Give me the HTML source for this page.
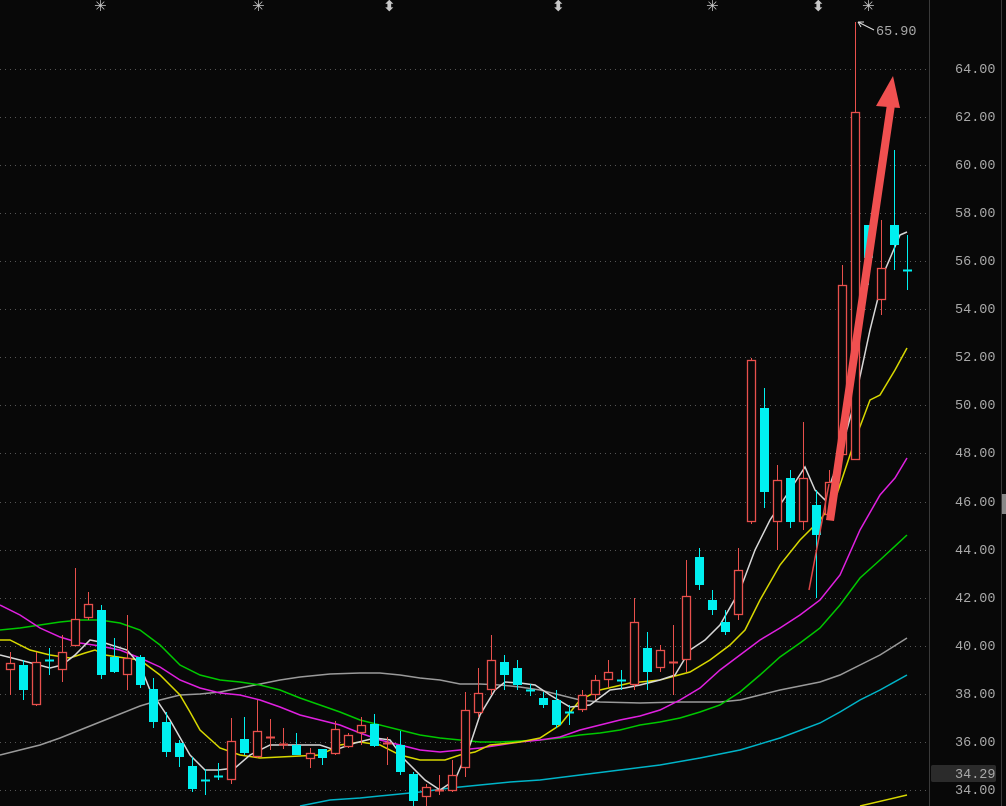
<!DOCTYPE html>
<html><head><meta charset="utf-8"><style>
html,body{margin:0;padding:0;background:#080808;width:1006px;height:806px;overflow:hidden}
svg{display:block}
text{font-family:"Liberation Mono","DejaVu Sans Mono",monospace;font-size:13.5px;fill:#a8a8a8}
.ic{font-family:"DejaVu Sans",sans-serif;font-size:15px;fill:#c8c8c8;font-weight:bold}
</style></head><body>
<svg id="s" width="1006" height="806" viewBox="0 0 1006 806" xmlns="http://www.w3.org/2000/svg">
<rect width="1006" height="806" fill="#080808"/>
<g id="grid" stroke="#555" stroke-width="1" stroke-dasharray="1,4"></g>
<line x1="929.5" y1="0" x2="929.5" y2="806" stroke="#3a3a3a"/>
<line x1="1001.5" y1="0" x2="1001.5" y2="806" stroke="#3a3a3a"/>
<g id="ma" fill="none" stroke-width="1.5"></g>
<g id="cd"></g>
<g id="labels">
<text x="955" y="73">64.00</text>
<text x="955" y="121">62.00</text>
<text x="955" y="169">60.00</text>
<text x="955" y="217">58.00</text>
<text x="955" y="265">56.00</text>
<text x="955" y="313">54.00</text>
<text x="955" y="361">52.00</text>
<text x="955" y="409">50.00</text>
<text x="955" y="457">48.00</text>
<text x="955" y="506">46.00</text>
<text x="955" y="554">44.00</text>
<text x="955" y="602">42.00</text>
<text x="955" y="650">40.00</text>
<text x="955" y="698">38.00</text>
<text x="955" y="746">36.00</text>
<text x="955" y="794">34.00</text>
</g>
<rect x="931" y="765" width="65" height="17" rx="2" fill="#2b2b2b"/>
<text x="955" y="778" fill="#d0d0d0">34.29</text>
<text x="876" y="35" fill="#e0e0e0">65.90</text>
<path d="M858 22 L874 30" stroke="#ddd" stroke-width="1"/>
<path d="M858 22 l6 0 M858 22 l3 5" stroke="#ddd" stroke-width="1"/>
<text class="ic" x="94" y="11">✳</text>
<text class="ic" x="252" y="11">✳</text>
<text class="ic" x="706" y="11">✳</text>
<text class="ic" x="862" y="11">✳</text>
<text class="ic" x="383" y="11">⬍</text>
<text class="ic" x="552" y="11">⬍</text>
<text class="ic" x="812" y="11">⬍</text>
<path d="M809 590 L829 484" stroke="#e04848" stroke-width="1.5"/>
<polygon points="826,520 887,104 895,105 834,521" fill="#f05050"/>
<polygon points="876,106 893,76 900,108" fill="#f05050"/>
<rect x="1002" y="494" width="4" height="20" fill="#888"/>
</svg>
<script>
var NS="http://www.w3.org/2000/svg";
function el(p,t,a){var e=document.createElementNS(NS,t);for(var k in a)e.setAttribute(k,a[k]);document.getElementById(p).appendChild(e);}
[69,117,165,213,261,309,357,405,453,502,550,598,646,694,742,790].forEach(function(y){el('grid','line',{x1:0,y1:y+.5,x2:928,y2:y+.5});});
var mas=[
['#9a9a9a',[[0,755],[20,750],[40,745],[60,738],[80,730],[100,722],[120,714],[140,706],[160,700],[180,695],[200,694],[220,692],[240,688],[260,684],[280,680],[300,677],[330,674],[360,673],[380,673],[400,675],[420,678],[440,680],[460,684],[480,684],[500,685],[520,687],[540,690],[560,695],[580,700],[600,702],[640,703],[680,702],[720,702],[740,700],[760,695],[780,690],[800,686],[820,682],[840,675],[860,665],[880,655],[907,638]]],
['#00b4c8',[[300,806],[330,800],[360,798],[390,795],[420,792],[450,788],[480,785],[510,782],[540,780],[580,775],[620,770],[660,765],[700,758],[740,750],[780,738],[820,723],[840,712],[860,700],[880,690],[907,675]]],
['#00c800',[[0,630],[20,628],[40,625],[60,622],[80,620],[100,620],[120,623],[140,630],[160,645],[180,665],[200,675],[220,680],[240,682],[260,685],[280,690],[300,698],[320,705],[340,712],[360,720],[380,725],[400,730],[420,735],[440,738],[460,740],[480,742],[500,742],[520,741],[540,740],[560,738],[580,735],[600,733],[620,730],[640,725],[660,722],[680,718],[700,712],[720,705],[740,692],[760,675],[780,657],[800,643],[820,628],[840,605],[860,578],[880,560],[907,535]]],
['#e020e0',[[0,605],[20,615],[40,628],[60,637],[80,643],[100,646],[120,650],[140,658],[160,667],[180,680],[200,688],[220,693],[240,695],[260,700],[280,707],[300,715],[320,720],[340,725],[360,733],[380,740],[400,745],[420,750],[440,752],[460,750],[480,748],[500,745],[520,742],[540,740],[560,737],[580,730],[600,725],[620,720],[640,716],[660,710],[680,700],[700,688],[720,670],[740,655],[760,640],[780,628],[800,615],[820,600],[840,575],[860,530],[880,495],[895,478],[907,458]]],
['#d8d800',[[0,640],[10,640],[30,650],[50,655],[70,658],[85,653],[95,650],[105,655],[125,658],[140,660],[160,675],[180,695],[190,712],[200,730],[220,748],[240,755],[260,758],[280,757],[300,756],[320,755],[340,745],[360,742],[380,745],[400,755],[420,760],[445,760],[460,755],[475,752],[490,745],[520,742],[540,738],[560,725],[580,700],[600,690],[630,683],[660,680],[690,672],[710,660],[730,645],[745,630],[760,600],[780,565],[800,540],[820,520],[835,500],[845,470],[855,440],[870,400],[880,395],[895,370],[907,348]]],
['#d8d8d8',[[0,655],[20,660],[50,668],[62,665],[75,655],[90,640],[105,643],[127,650],[140,665],[150,690],[170,720],[190,755],[205,770],[218,770],[235,768],[250,755],[270,745],[300,745],[320,745],[335,750],[355,743],[375,738],[390,740],[405,760],[425,780],[440,790],[455,780],[470,745],[480,715],[495,690],[505,682],[520,683],[535,685],[550,695],[570,707],[590,705],[610,690],[625,688],[640,685],[660,680],[675,675],[690,650],[705,640],[720,625],[740,590],[755,550],[770,520],[790,490],[805,467],[815,490],[825,500],[840,455],[855,400],[870,330],[885,270],[900,235],[907,232]]],
['#d8d800',[[860,806],[907,795]]]
];
mas.forEach(function(m){el('ma','polyline',{points:m[1].map(function(p){return p.join(',')}).join(' '),stroke:m[0]});});
var C=[
[10,'r',663,670,652,695],[23,'c',665,690,660,700],[36,'r',662,705,652,706],[49,'c',660,660,648,675],[62,'r',652,670,635,682],
[75,'r',619,646,568,646],[88,'r',604,618,592,620],[101,'c',610,675,605,679],[114,'c',657,672,638,673],[127,'r',658,675,615,690],
[140,'c',657,685,655,688],[153,'c',689,722,678,728],[166,'c',722,752,712,757],[179,'c',743,757,740,767],[192,'c',766,789,757,792],
[205,'c',780,780,769,795],[218,'c',776,776,763,780],[231,'r',741,780,718,784],[244,'c',739,753,717,755],[257,'r',731,757,700,758],
[270,'r',737,737,719,750],[283,'r',744,744,728,749],[296,'c',745,755,733,755],[310,'r',753,759,748,768],[322,'c',749,758,749,765],
[335,'r',729,754,721,755],[348,'r',735,747,733,748],[361,'r',725,733,717,745],[374,'c',724,746,714,747],[387,'r',743,743,737,765],
[400,'c',745,772,731,775],[413,'c',774,801,772,806],[426,'r',787,797,784,806],[439,'r',790,790,775,795],[452,'r',775,791,760,792],
[465,'r',710,768,692,777],[478,'r',693,713,668,717],[491,'r',660,690,635,695],[504,'c',662,675,655,690],[517,'c',668,685,660,690],
[530,'c',690,690,684,696],[543,'c',698,705,692,708],[556,'c',700,725,690,728],[569,'c',712,712,705,725],[582,'r',695,710,690,712],
[595,'r',680,695,675,700],[608,'r',672,680,660,688],[621,'c',680,680,670,690],[634,'r',622,685,598,690],[647,'c',648,672,632,690],
[660,'r',650,668,645,672],[673,'r',662,662,625,695],[686,'r',596,660,560,672],[699,'c',557,585,548,590],[712,'c',600,610,590,615],
[725,'c',622,632,610,635],[738,'r',570,615,548,620],[751,'r',360,522,358,524],[764,'c',408,492,388,508],[777,'r',480,522,465,550],
[790,'c',478,522,470,528],[803,'r',478,522,422,530],[816,'c',505,535,490,598],[829,'r',482,515,470,520],[842,'r',285,455,265,460],
[855,'r',112,460,22,460],[868,'c',225,258,225,285],[881,'r',268,300,220,315],[894,'c',225,245,150,270],[907,'c',270,270,235,290]
];
C.forEach(function(c){
 var x=c[0],col=c[1]=='r'?'#e8504c':'#00f0f0';
 var bt=c[2],bb=c[3];
 el('cd','line',{x1:x+.5,y1:c[4],x2:x+.5,y2:bt,stroke:col});
 el('cd','line',{x1:x+.5,y1:bb,x2:x+.5,y2:c[5],stroke:col});
 if(bb-bt<2){el('cd','line',{x1:x-4,y1:bt+.5,x2:x+5,y2:bt+.5,stroke:col,'stroke-width':2});}
 else if(c[1]=='r'){el('cd','rect',{x:x-3.5,y:bt+.5,width:8,height:bb-bt-1,fill:'#080808',stroke:col,'stroke-width':1.3});}
 else{el('cd','rect',{x:x-4,y:bt,width:9,height:bb-bt,fill:col});}
});
</script>
</body></html>
